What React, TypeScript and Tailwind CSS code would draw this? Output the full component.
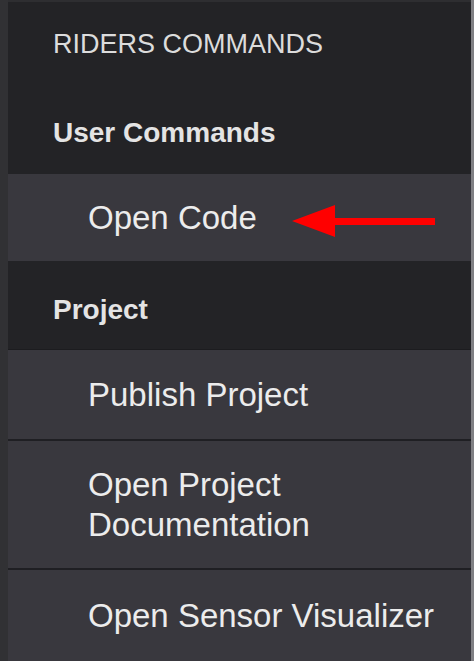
const items = ["Publish Project", "Open Project Documentation", "Open Sensor Visualizer"];

const App = () => {
  return (
    <div className="w-[474px] h-[661px] overflow-hidden flex bg-[#313134] font-['Liberation_Sans',Arial,sans-serif] text-[#ececec]">
      {/* left gutter */}
      <div className="w-[8px] shrink-0 bg-[#313134]" />

      <div className="flex-1 flex flex-col border-r-[3px] border-[#808084]">
        {/* panel header */}
        <div className="h-[174px] shrink-0 bg-[#232326] pl-[45px] pt-[26px] border-t-2 border-[#2e2e31]">
          <div className="text-[27px] leading-[32px] text-[#dcdcdc]">RIDERS COMMANDS</div>
          <div className="mt-[57px] text-[28px] leading-[32px] font-bold text-[#e4e4e4]">User Commands</div>
        </div>

        <div className="relative h-[87px] shrink-0 flex items-center pl-[80px] bg-[#39383e] text-[33px] leading-[40px]">
          Open Code
          {/* annotation arrow */}
          <svg className="absolute left-[284px] top-[31px]" width="146" height="34" viewBox="0 0 146 34">
            <polygon points="0,16 43,0 43,32" fill="#ff0000" />
            <rect x="42" y="13" width="101" height="7" fill="#ff0000" />
          </svg>
        </div>

        <div className="h-[89px] shrink-0 bg-[#232326] pl-[45px] pt-[33px] border-b border-[#1c1c1f]">
          <div className="text-[28px] leading-[32px] font-bold text-[#e4e4e4]">Project</div>
        </div>

        {items.map((label, i) => (
          <div
            key={label}
            className={
              i === 1
                ? "h-[129px] shrink-0 flex items-center pl-[80px] pr-[20px] bg-[#39383e] text-[33px] leading-[40px] border-b-2 border-[#1f1f23]"
                : i === 0
                ? "h-[91px] shrink-0 flex items-center pl-[80px] pr-[20px] bg-[#39383e] text-[33px] leading-[40px] border-b-2 border-[#1f1f23]"
                : "flex-1 flex items-center pl-[80px] pr-[20px] bg-[#39383e] text-[33px] leading-[40px]"
            }
          >
            {label}
          </div>
        ))}
      </div>
    </div>
  );
};

export default App;
